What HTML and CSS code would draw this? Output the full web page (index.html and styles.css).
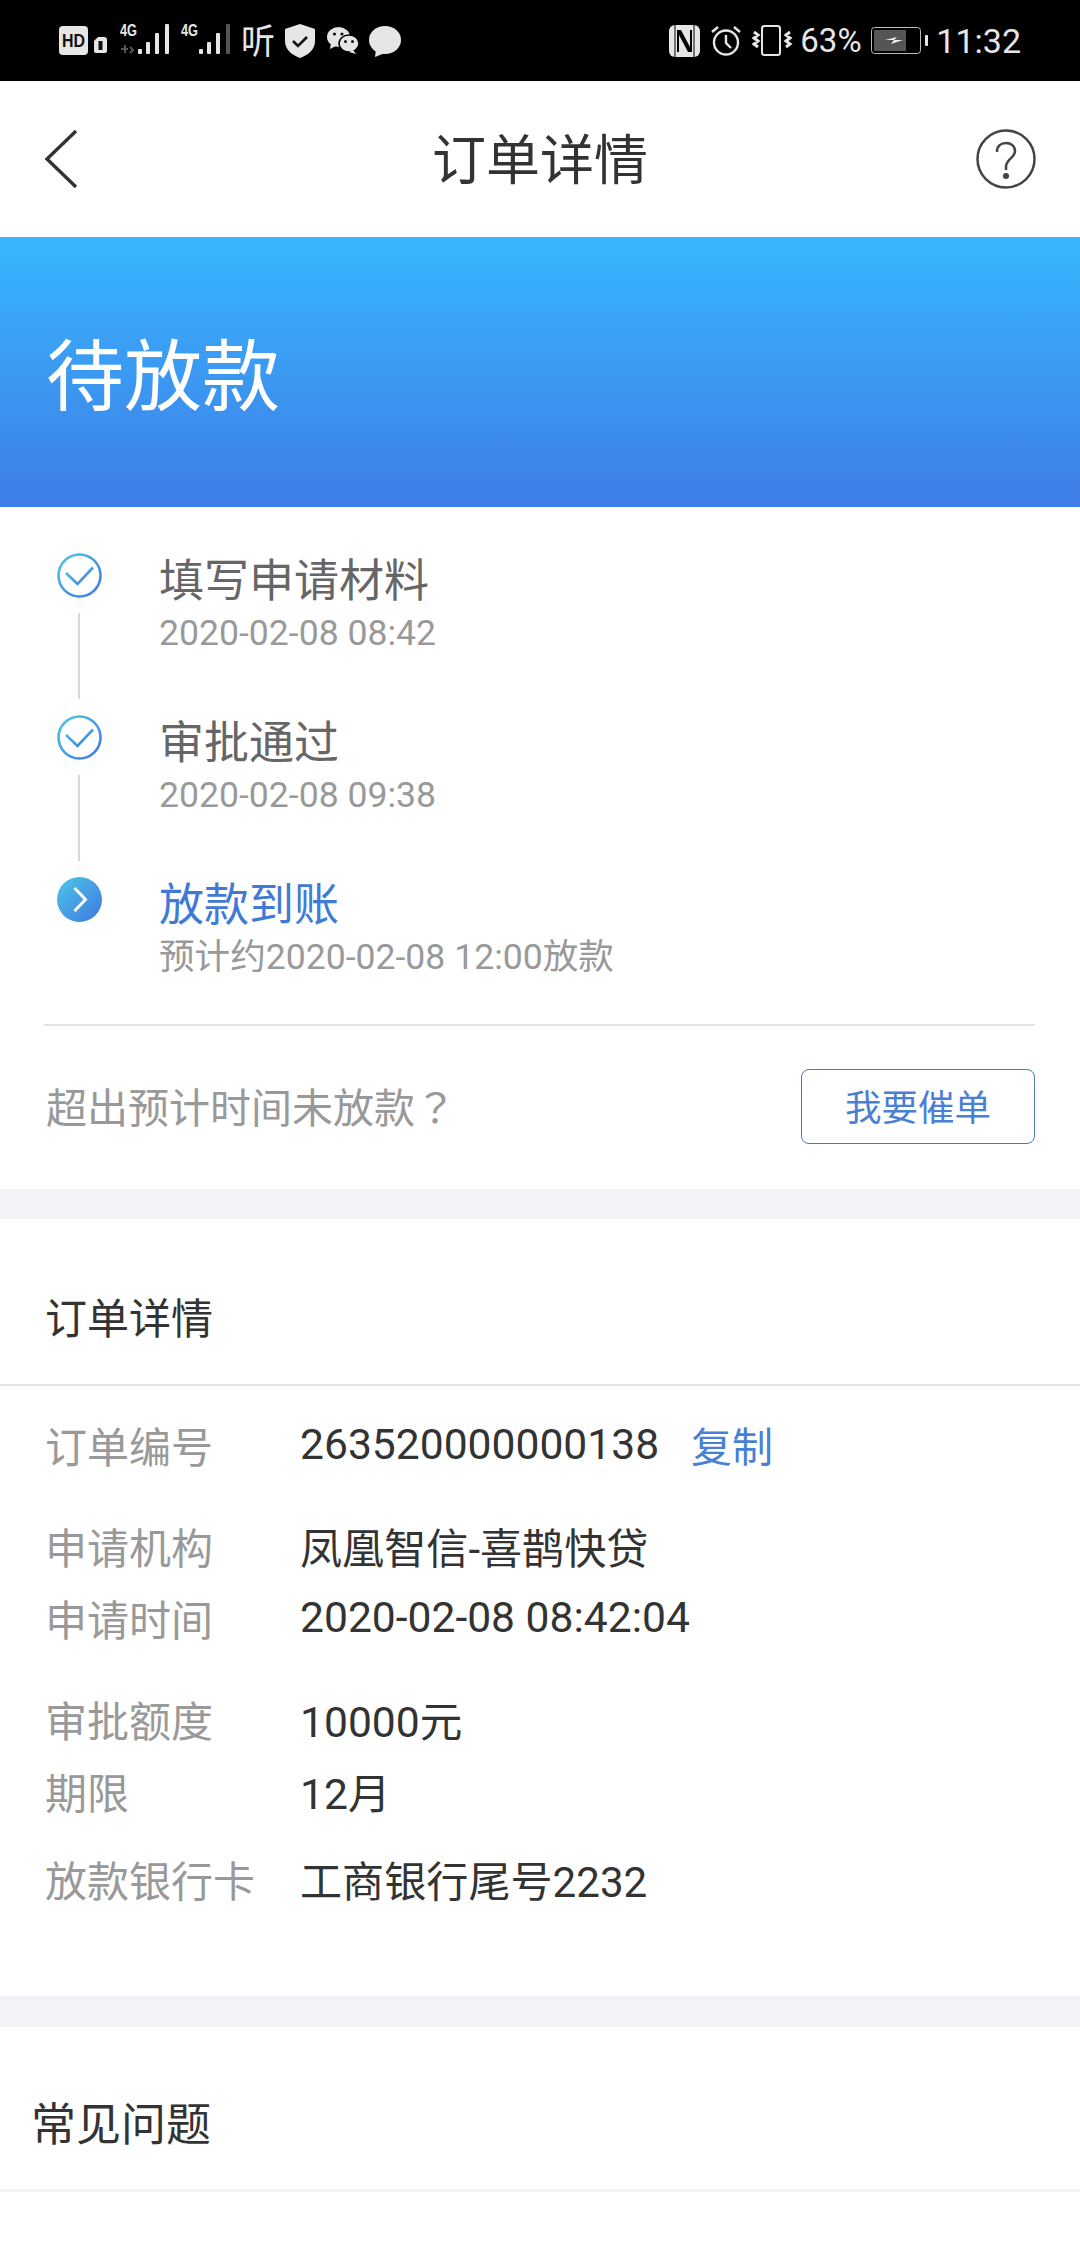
FILE: index.html
```html
<!DOCTYPE html>
<html lang="zh-CN">
<head>
  <meta charset="UTF-8">
  <title>订单详情</title>
  <link rel="stylesheet" href="styles.css">
</head>
<body>
<div class="statusbar">
  <div class="status-left">
    <svg class="ic-hd" width="29" height="29" viewBox="0 0 29 29"><rect width="29" height="29" rx="4" fill="#e6e6e6"/><text x="3" y="21" textLength="23" lengthAdjust="spacingAndGlyphs" class="ic-text-hd">HD</text></svg>
    <svg class="ic-sim" width="13" height="16" viewBox="0 0 13 16"><path d="M4 0h6a3 3 0 0 1 3 3v11a2 2 0 0 1-2 2H2a2 2 0 0 1-2-2V4z" fill="#e6e6e6"/><rect x="4.500" y="4" width="4" height="9" fill="#111"/></svg>
    <svg class="ic-sig" width="50" height="38" viewBox="0 -4 50 38">
      <text x="0" y="13" textLength="17" lengthAdjust="spacingAndGlyphs" class="ic-text-4g">4G</text>
      <path d="M1 26h7M5 22v8M10 24l3 3-3 3" stroke="#555" stroke-width="2" fill="none"/>
      <rect x="18" y="26" width="4" height="5" rx="1" fill="#e6e6e6"/><rect x="26" y="19" width="4" height="12" rx="1" fill="#e6e6e6"/><rect x="35" y="10" width="4" height="21" rx="1" fill="#e6e6e6"/><rect x="45" y="1" width="4" height="30" rx="1" fill="#e6e6e6"/>
    </svg>
    <svg class="ic-sig2" width="50" height="38" viewBox="0 -4 50 38">
      <text x="0" y="13" textLength="17" lengthAdjust="spacingAndGlyphs" class="ic-text-4g">4G</text>
      <rect x="18" y="26" width="4" height="5" rx="1" fill="#e6e6e6"/><rect x="26" y="19" width="4" height="12" rx="1" fill="#e6e6e6"/><rect x="35" y="10" width="4" height="21" rx="1" fill="#e6e6e6"/><rect x="45" y="1" width="4" height="30" rx="1" fill="#555"/>
    </svg>
    <span class="ting">听</span>
    <svg class="ic-shield" width="30" height="34" viewBox="0 0 30 34"><path d="M15 0l15 5v12c0 9-7 14-15 17C7 31 0 26 0 17V5z" fill="#e6e6e6"/><path d="M8 17l5 5 9-9" stroke="#111" stroke-width="2.600" fill="none"/></svg>
    <svg class="ic-wechat" width="32" height="27" viewBox="0 0 32 27"><ellipse cx="11.500" cy="10" rx="11.500" ry="10" fill="#e6e6e6"/><path d="M4 16l-1 6 6-3z" fill="#e6e6e6"/><circle cx="7.500" cy="7" r="1.600" fill="#111"/><circle cx="15" cy="7" r="1.600" fill="#111"/><ellipse cx="22" cy="16.500" rx="10" ry="8.500" fill="#e6e6e6" stroke="#000" stroke-width="1.500"/><path d="M26 23l3 4-7-2z" fill="#e6e6e6"/><circle cx="18.500" cy="14.500" r="1.500" fill="#111"/><circle cx="25.500" cy="14.500" r="1.500" fill="#111"/></svg>
    <svg class="ic-bubble" width="32" height="31" viewBox="0 0 32 31"><ellipse cx="16" cy="14" rx="16" ry="14" fill="#e6e6e6"/><path d="M7 23l-1 8 10-4z" fill="#e6e6e6"/></svg>
  </div>
  <div class="status-right">
    <svg class="ic-nfc" width="31" height="32" viewBox="0 0 31 32"><rect width="31" height="32" rx="6" fill="#e6e6e6"/><path d="M8 5h4l9 17V5h2v22h-4L10 10v17H8z" fill="#000"/><path d="M6 0v32M25 0v32" stroke="#000" stroke-width="1"/></svg>
    <svg class="ic-alarm" width="30" height="31" viewBox="0 0 30 31" fill="none" stroke="#e6e6e6" stroke-width="2.400"><circle cx="15" cy="17.500" r="12"/><path d="M15 10v8l5 5M1 7l6-5M29 7l-6-5"/></svg>
    <svg class="ic-vibrate" width="41" height="31" viewBox="0 0 41 31" fill="none" stroke="#e6e6e6" stroke-width="2"><rect x="10" y="1" width="18" height="29" rx="2.500"/><path d="M2 7l4 3-4 3 4 3-4 3 4 3M38 7l-4 3 4 3-4 3 4 3-4 3" stroke-width="3"/></svg>
    <span class="pct">63%</span>
    <svg class="ic-batt" width="58" height="27" viewBox="0 0 58 27"><rect x="0.500" y="0.500" width="49" height="26" rx="3" fill="none" stroke="#bbb"/><rect x="3" y="3" width="32" height="21" fill="#555"/><path d="M14 13l12-3-3 3h9l-12 4 3-4z" fill="#eee"/><rect x="54" y="8" width="3" height="11" rx="1" fill="#e6e6e6"/></svg>
    <span class="clock">11:32</span>
  </div>
</div>

<div class="nav">
  <svg class="back" width="34" height="60" viewBox="0 0 34 60"><path d="M32 2L3 30l29 28" fill="none" stroke="#333" stroke-width="3.400"/></svg>
  <div class="nav-title">订单详情</div>
  <svg class="help" width="60" height="60" viewBox="0 0 60 60" fill="none" stroke="#444" stroke-width="2.500"><circle cx="30" cy="30" r="28.500"/><path d="M21 23c0-6 4-9 9-9s9 3 9 8c0 7-9 8-9 16v3"/><circle cx="30" cy="47" r="1.800" fill="#444"/></svg>
</div>

<div class="banner">待放款</div>

<div class="card">
  <svg class="defs" width="0" height="0"><defs><linearGradient id="stepGrad" x1="0" y1="0" x2="1" y2="1"><stop offset="0" stop-color="#4dc6ea"/><stop offset="1" stop-color="#3f78e0"/></linearGradient></defs></svg>
  <div class="step">
    <div class="step-side">
      <svg class="step-ic" width="45" height="45" viewBox="0 0 45 45" fill="none" stroke="url(#stepGrad)" stroke-width="2.600"><circle cx="22.500" cy="22.500" r="21"/><path d="M9 20l11.500 11L36 14.500"/></svg>
      <div class="step-line"></div>
    </div>
    <div class="step-text">
      <div class="step-title">填写申请材料</div>
      <div class="step-sub">2020-02-08 08:42</div>
    </div>
  </div>
  <div class="step">
    <div class="step-side">
      <svg class="step-ic" width="45" height="45" viewBox="0 0 45 45" fill="none" stroke="url(#stepGrad)" stroke-width="2.600"><circle cx="22.500" cy="22.500" r="21"/><path d="M9 20l11.500 11L36 14.500"/></svg>
      <div class="step-line"></div>
    </div>
    <div class="step-text">
      <div class="step-title">审批通过</div>
      <div class="step-sub">2020-02-08 09:38</div>
    </div>
  </div>
  <div class="step step-last">
    <div class="step-side">
      <svg class="step-ic" width="45" height="45" viewBox="0 0 45 45"><circle cx="22.500" cy="22.500" r="22.500" fill="url(#stepGrad)"/><path d="M17.500 11l11 11.500-11 11.500" fill="none" stroke="#fff" stroke-width="3"/></svg>
    </div>
    <div class="step-text">
      <div class="step-title step-now">放款到账</div>
      <div class="step-sub">预计约2020-02-08 12:00放款</div>
    </div>
  </div>
  <div class="urge">
    <span class="urge-text">超出预计时间未放款<span class="urge-mark" lang="zh-TW">？</span></span>
    <div class="urge-btn">我要催单</div>
  </div>
</div>

<div class="gap"></div>

<div class="detail">
  <div class="detail-head">订单详情</div>
  <div class="detail-body">
    <div class="group group-first">
      <div class="row"><span class="label">订单编号</span><span class="value">263520000000138</span><span class="copy">复制</span></div>
    </div>
    <div class="group">
      <div class="row"><span class="label">申请机构</span><span class="value value-cjk">凤凰智信-喜鹊快贷</span></div>
      <div class="row"><span class="label">申请时间</span><span class="value">2020-02-08 08:42:04</span></div>
    </div>
    <div class="group">
      <div class="row"><span class="label">审批额度</span><span class="value">10000元</span></div>
      <div class="row"><span class="label">期限</span><span class="value">12月</span></div>
    </div>
    <div class="group group-last">
      <div class="row"><span class="label">放款银行卡</span><span class="value value-cjk">工商银行尾号2232</span></div>
    </div>
  </div>
</div>

<div class="gap gap-2"></div>

<div class="faq-head">常见问题</div>
<div class="faq-rule"></div>
</body>
</html>
```

FILE: styles.css
```css
html, body {
  margin: 0;
  padding: 0;
}
body {
  width: 1080px;
  height: 2244px;
  overflow: hidden;
  background: #fff;
  font-family: Roboto, "Noto Sans CJK SC", sans-serif;
  color: #333;
}

/* status bar */
.statusbar {
  height: 81px;
  background: #000;
  color: #e6e6e6;
  display: flex;
  justify-content: space-between;
  align-items: center;
  padding: 0 59px;
  box-sizing: border-box;
}
.status-left, .status-right {
  display: flex;
  align-items: center;
}
.ic-hd { margin-top: -1px; }
.ic-sim { margin-left: 6px; margin-top: 9px; }
.ic-sig { margin-left: 13px; margin-top: -6px; }
.ic-sig2 { margin-left: 11px; margin-top: -6px; }
.ic-text-hd {
  font: 700 18px "Liberation Sans", sans-serif;
  fill: #111;
}
.ic-text-4g {
  font: 700 17px "Liberation Sans", sans-serif;
  fill: #e6e6e6;
}
.ting {
  margin-left: 10px;
  width: 34px;
  font-size: 34px;
  line-height: 36px;
  transform: scaleY(1.05);
}
.ic-shield { margin-left: 10px; }
.ic-wechat { margin-left: 12px; }
.ic-bubble { margin-left: 10px; margin-top: 1px; }
.ic-alarm { margin-left: 11px; }
.ic-vibrate { margin-left: 11px; }
.pct {
  margin-left: 7px;
  font-size: 33px;
  width: 61px;
}
.ic-batt { margin-left: 10px; }
.clock {
  margin-left: 7px;
  font-size: 34px;
}

/* nav */
.nav {
  height: 156px;
  display: grid;
  grid-template-columns: 1fr auto 1fr;
  align-items: center;
  padding: 0 44px;
  box-sizing: border-box;
}
.back { justify-self: start; }
.help { justify-self: end; }
.nav-title {
  margin-top: 6px;
  font-size: 54px;
  line-height: 70px;
  color: #333;
}

/* banner */
.banner {
  height: 270px;
  padding: 0 46px;
  box-sizing: border-box;
  background: linear-gradient(180deg, #37b6fe 0%, #3f7de6 100%);
  color: #fff;
  font-size: 78px;
  line-height: 284px;
}

/* steps */
.card {
  height: 682px;
  padding: 46px 45px 0 44px;
  box-sizing: border-box;
}
.defs {
  position: absolute;
}
.step {
  height: 162px;
  display: flex;
  padding-left: 13px;
}
.step-last {
  height: 147px;
  border-bottom: 2px solid #e3e3e3;
}
.step-side {
  width: 102px;
  flex: none;
}
.step-ic {
  display: block;
}
.step-line {
  width: 2px;
  height: 86px;
  margin: 15px 0 0 21px;
  background: #d6d6d6;
}
.step-text {
  margin-top: -1px;
}
.step-title {
  font-size: 45px;
  line-height: 59px;
  color: #666;
}
.step-now {
  color: #4079d6;
}
.step-sub {
  font-size: 35.6px;
  line-height: 44px;
  color: #999;
}
.urge {
  display: flex;
  justify-content: space-between;
  align-items: center;
  margin-top: 43px;
  padding-left: 2px;
}
.urge-text {
  margin-bottom: 4px;
  font-size: 41px;
  color: #999;
}
.urge-mark {
  font-family: "Noto Sans CJK TC", sans-serif;
}
.urge-btn {
  width: 234px;
  height: 75px;
  box-sizing: border-box;
  border: 1px solid #4a7ab0;
  border-radius: 8px;
  color: #4a7fd6;
  font-size: 36.5px;
  line-height: 78px;
  text-align: center;
}

.gap {
  height: 30px;
  background: #f1f3f7;
}
.gap-2 {
  height: 31px;
}

/* detail */
.detail {
  height: 777px;
}
.detail-head {
  height: 167px;
  box-sizing: border-box;
  padding: 71px 45px 0;
  font-size: 42px;
  line-height: 60px;
  color: #333;
  border-bottom: 2px solid #e3e3e3;
}
.detail-body {
  padding: 0 45px;
}
.group {
  margin-top: 29px;
}
.group-first {
  margin-top: 22px;
}
.group-last {
  margin-top: 16px;
}
.row {
  height: 72px;
  display: flex;
  align-items: center;
}
.label {
  width: 255px;
  color: #999;
  font-size: 42px;
}
.value {
  color: #333;
  font-size: 42.6px;
}
.value-cjk {
  font-size: 42.1px;
}
.copy {
  margin-left: 32px;
  color: #4a7fd6;
  font-size: 41px;
}

/* faq */
.faq-head {
  height: 162px;
  box-sizing: border-box;
  padding: 69px 31px 0;
  font-size: 45px;
  line-height: 60px;
  color: #333;
}
.faq-rule {
  height: 3px;
  background: #f2f3f5;
}
```
